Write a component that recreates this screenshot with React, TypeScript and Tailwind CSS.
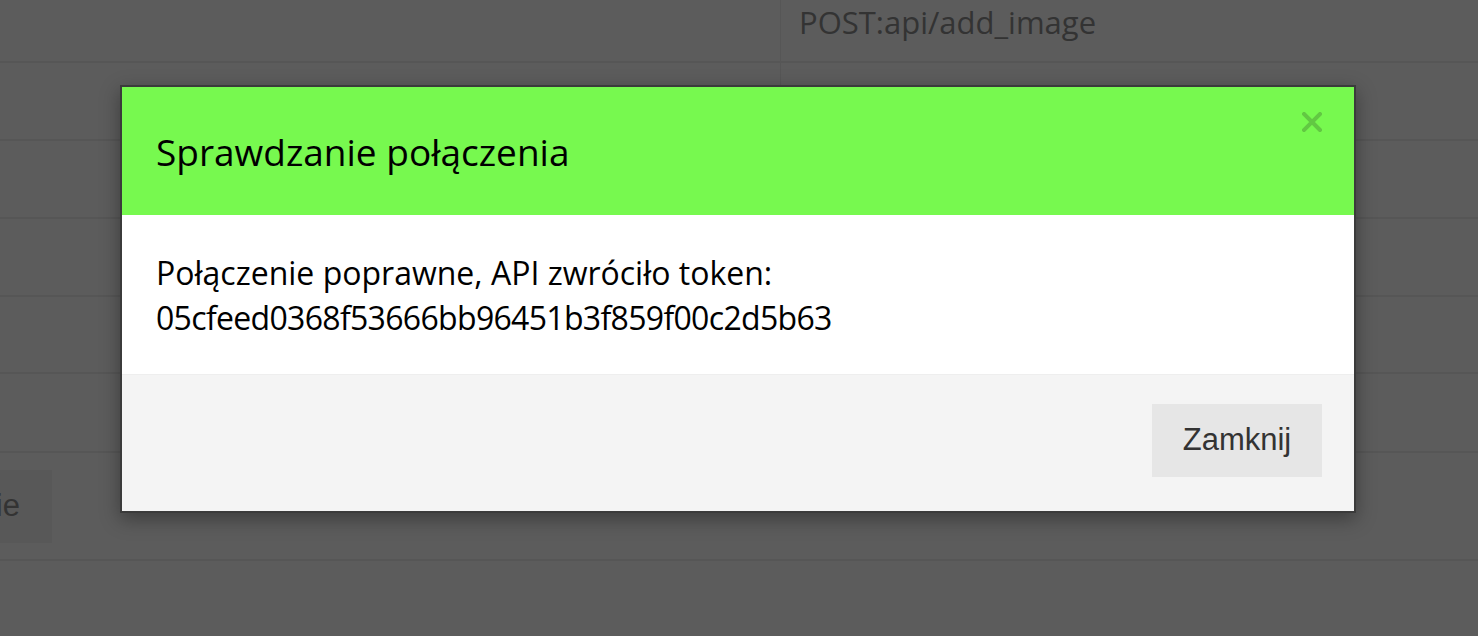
import React from 'react'

const rows = [
  { h: 'h-[63px]', right: 'POST:api/add_image' },
  { h: 'h-[78px]', right: '' },
  { h: 'h-[78px]', right: '' },
  { h: 'h-[78px]', right: '' },
  { h: 'h-[77px]', right: '' },
  { h: 'h-[79px]', right: '' },
]

function CloseIcon() {
  return (
    <svg width="20" height="20" viewBox="0 0 20 20" aria-hidden="true">
      <path d="M2 2 L18 18 M18 2 L2 18" stroke="#62c843" strokeWidth="4" strokeLinecap="square" />
    </svg>
  )
}

export default function App() {
  return (
    <div className="relative h-[636px] w-full overflow-hidden bg-[#5c5c5c] font-['Open_Sans',sans-serif]">
      {/* page behind the dialog */}
      <div className="flex flex-col">
        {rows.map((row, i) => (
          <div key={i} className={`flex ${row.h} border-b-2 border-[#565656]`}>
            <div className="w-[781px] shrink-0 border-r border-[#565656]" />
            <div className="flex-1 pl-[18px] pt-[2px] text-[31px] leading-[40px] text-[#333]">{row.right}</div>
          </div>
        ))}
        <div className="flex h-[108px] items-center border-b-2 border-[#565656]">
          <div className="flex h-[73px] w-[52px] items-center justify-end overflow-visible bg-[#585858] pr-[32px] font-['Liberation_Sans',sans-serif] text-[31px] text-[#333]">
            ie
          </div>
        </div>
      </div>

      {/* dialog */}
      <div className="absolute left-[120px] top-[85px] w-[1236px] border-2 border-[#3b3b3b] shadow-[0_6px_18px_rgba(0,0,0,0.35)]">
        <div className="relative flex h-[128px] items-center bg-[#77f94f] pl-[34px]">
          <h4 className="text-[37px] font-normal leading-none text-black">Sprawdzanie połączenia</h4>
          <button className="absolute right-[32px] top-[25px]">
            <CloseIcon />
          </button>
        </div>
        <div className="h-[159px] bg-white px-[34px] pt-[35px] text-[32px] leading-[45px] text-black">
          <p>Połączenie poprawne, API zwróciło token:</p>
          <p className="tracking-[-0.68px]">05cfeed0368f53666bb96451b3f859f00c2d5b63</p>
        </div>
        <div className="flex h-[137px] justify-end border-t border-[#eeeeee] bg-[#f4f4f4] pr-[32px] pt-[29px]">
          <button className="h-[73px] w-[170px] bg-[#e6e6e6] font-['Liberation_Sans',sans-serif] text-[31px] text-[#333]">
            Zamknij
          </button>
        </div>
      </div>
    </div>
  )
}
